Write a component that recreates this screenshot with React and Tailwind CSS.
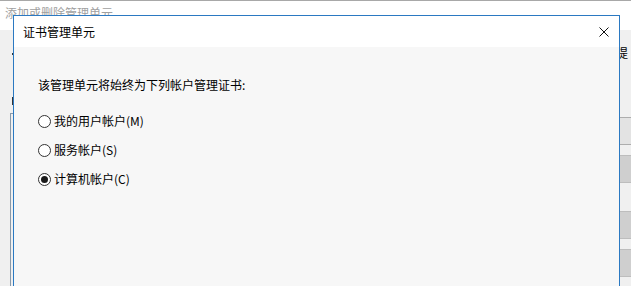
import React from "react";

const font = { fontFamily: '"Noto Sans CJK SC", "Microsoft YaHei", sans-serif' };

function Radio({ label, checked }) {
  return (
    <div className="flex items-center h-[16px]">
      <div className="w-[13px] h-[13px] rounded-full border border-[#333333] bg-white flex items-center justify-center">
        {checked && <div className="w-[7px] h-[7px] rounded-full bg-[#1a1a1a]" />}
      </div>
      <span className="ml-[3px] text-[12px] leading-[16px] text-black">{label}</span>
    </div>
  );
}

export default function App() {
  return (
    <div className="relative w-[631px] h-[286px] overflow-hidden bg-[#f0f0f0]" style={font}>
      {/* Background window */}
      <div className="flex flex-col h-full">
        <div className="h-[1px] bg-[#a8a8a8]" />
        <div className="h-[29px] bg-white pl-[5px] pt-[4px] text-[12px] leading-[16px] text-[#a0a0a0]">
          添加或删除管理单元
        </div>
        <div className="flex flex-1">
          {/* left column */}
          <div className="w-[13px] flex flex-col">
            <div className="mt-[23px] ml-[12px] w-[1px] h-[2px] bg-[#333333]" />
            <div className="mt-[42px] ml-[12px] w-[1px] h-[8px] bg-[#333333]" />
            <div className="mt-[8px] ml-[10px] flex-1 border-l border-t border-[#8a9aaa]" />
          </div>
          <div className="flex-1" />
          {/* right column */}
          <div className="w-[31px] flex flex-col">
            <div className="mt-[15px] h-[16px] text-[12px] leading-[16px] text-black text-right pr-[3px] whitespace-nowrap">
              提
            </div>
            <div className="mt-[56px] h-[28px] border-y border-[#adadad] bg-[#e3e3e3]" />
            <div className="mt-[10px] h-[28px] border-y border-[#bdbdbd] bg-[#cfcfcf]" />
            <div className="mt-[28px] h-[28px] border-y border-[#bdbdbd] bg-[#cfcfcf]" />
            <div className="mt-[10px] h-[28px] border-y border-[#bdbdbd] bg-[#cfcfcf]" />
          </div>
        </div>
      </div>

      {/* Dialog window */}
      <div className="absolute left-[13px] top-[15px] w-[607px] h-[300px] border border-[#2b79c2] bg-[#f7f7f7] flex flex-col">
        <div className="h-[31px] bg-white flex items-center justify-between pl-[9px] pr-[10px]">
          <span className="text-[12px] leading-[16px] text-black">证书管理单元</span>
          <svg width="10" height="10" viewBox="0 0 10 10" className="block">
            <path d="M0.5 0.5 L9.5 9.5 M9.5 0.5 L0.5 9.5" stroke="#111" strokeWidth="1" fill="none" />
          </svg>
        </div>
        <div className="flex-1 pl-[24px] pt-[30px] flex flex-col">
          <div className="text-[12px] leading-[16px] text-black">该管理单元将始终为下列帐户管理证书:</div>
          <div className="mt-[20px] flex flex-col gap-[13px]">
            <Radio label="我的用户帐户(M)" />
            <Radio label="服务帐户(S)" />
            <Radio label="计算机帐户(C)" checked />
          </div>
        </div>
      </div>
    </div>
  );
}
